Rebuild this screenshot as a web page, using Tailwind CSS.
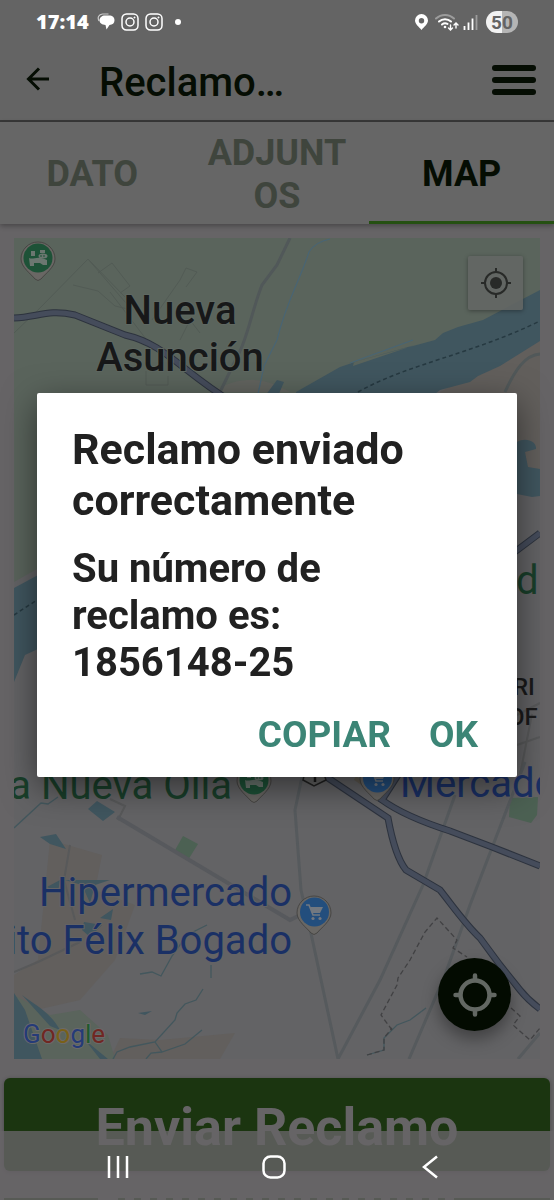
<!DOCTYPE html>
<html lang="es">
  <head>
    <meta charset="UTF-8" />
    <meta name="viewport" content="width=device-width, initial-scale=1.0" />
    <title>Reclamo</title>
    <script src="https://cdn.jsdelivr.net/npm/@tailwindcss/browser@4"></script>
  </head>
  <body class="h-screen overflow-hidden bg-[#666466] font-['Roboto','Liberation_Sans',sans-serif]">
    <!-- Status bar -->
    <div class="flex h-11 items-center justify-between bg-[#646464] pr-9 pl-9 text-white">
      <div class="flex items-center gap-2">
        <span class="font-['Open_Sans',sans-serif] text-xl leading-none font-extrabold">17:14</span>
        <svg class="h-[18px] w-[18px]" viewBox="0 0 18 18">
          <path d="M2 8C0 4 2 1.500 5.500 1h6" fill="none" stroke="#ccc" stroke-width="1.200" />
          <path d="M8 2.500h4c3.500 0 5.500 2 5.500 4.800S15.500 12 12.500 12L9.500 16.500 8.500 12C5 12 2.500 10 2.500 7.300S5 2.500 8 2.500Z" fill="#fff" />
        </svg>
        <svg class="-ml-0.5 h-[18px] w-[18px]" viewBox="0 0 18 18" fill="none" stroke="#fff" stroke-width="1.500">
          <rect x="1" y="1" width="16" height="16" rx="4.500" />
          <circle cx="9" cy="9" r="4" />
          <circle cx="13.500" cy="4.500" r=".6" fill="#fff" stroke-width=".8" />
        </svg>
        <svg class="-ml-0.5 h-[18px] w-[18px]" viewBox="0 0 18 18" fill="none" stroke="#fff" stroke-width="1.500">
          <rect x="1" y="1" width="16" height="16" rx="4.500" />
          <circle cx="9" cy="9" r="4" />
          <circle cx="13.500" cy="4.500" r=".6" fill="#fff" stroke-width=".8" />
        </svg>
        <span class="ml-1 h-1.5 w-1.5 rounded-full bg-white"></span>
      </div>
      <div class="flex items-center gap-[7px]">
        <svg class="h-4 w-[13px]" viewBox="0 0 13 16">
          <path d="M6.500 0A6.500 6.500 0 0 0 0 6.500C0 10 4 13 6.500 16 9 13 13 10 13 6.500A6.500 6.500 0 0 0 6.500 0Zm0 4a2.700 2.700 0 1 1 0 5.400 2.700 2.700 0 0 1 0-5.400Z" fill="#fff" fill-rule="evenodd" />
        </svg>
        <div class="flex items-center gap-1">
          <svg class="h-[18px] w-6" viewBox="0 0 24 18" fill="none" stroke-linecap="round">
            <path d="M1 5.500a13 13 0 0 1 18 0" stroke="#9c9c9c" stroke-width="2" />
            <path d="M4 8.500a9 9 0 0 1 12 0M7 11.500a5 5 0 0 1 5.500-.6" stroke="#fff" stroke-width="2" />
            <circle cx="10" cy="14" r="1.300" fill="#fff" />
            <path d="M15.500 12v4.500M13.500 15l2 2 2-2M21 15v-4.500M19 12l2-2 2 2" stroke="#fff" stroke-width="1.400" />
          </svg>
          <svg class="h-4 w-4" viewBox="0 0 16 16" stroke-width="1.800">
            <path d="M1.500 12v4M5.500 8.500V16M9.500 4.500V16" stroke="#fff" />
            <path d="M13.500 1v15" stroke="#9c9c9c" />
          </svg>
        </div>
        <span class="flex h-[22px] w-8 items-center justify-center rounded-full bg-linear-to-r from-[#f2f2f2] from-50% to-[#b5b5b5] to-50% text-[19px] leading-none font-bold text-[#636363]">50</span>
      </div>
    </div>

    <!-- App bar -->
    <header class="flex h-[78px] items-center border-b-2 border-[#383838] bg-[#646464] pr-[18px] pl-6">
      <button type="button" aria-label="Volver" class="mb-2 h-7 w-7">
        <svg class="h-7 w-7" viewBox="0 0 28 28" fill="none" stroke="#050d03" stroke-width="3">
          <path d="M25 15H4.500M15 4.500 4.500 15 15 25.500" />
        </svg>
      </button>
      <h1 class="mt-0.5 ml-[47px] flex-1 truncate text-[40px] leading-[48px] font-medium text-[#050d03]">Reclamo…</h1>
      <button type="button" aria-label="Menú" class="mb-1 flex w-11 flex-col gap-1.5">
        <span class="h-1.5 rounded-full bg-[#050d03]"></span>
        <span class="h-1.5 rounded-full bg-[#050d03]"></span>
        <span class="h-1.5 rounded-full bg-[#050d03]"></span>
      </button>
    </header>

    <!-- Tabs -->
    <nav class="grid h-[102px] grid-cols-3 bg-[#666666] text-[36px] leading-[43px] font-bold text-[#3f453d] shadow-[0_2px_5px_rgba(0,0,0,0.3)]">
      <button type="button" class="border-b-3 border-transparent pt-1.5">DATO</button>
      <button type="button" class="border-b-3 border-transparent pt-1.5">ADJUNT<br />OS</button>
      <button type="button" class="border-b-3 border-[#255012] pt-1.5 text-[#050d03]">MAP</button>
    </nav>

    <main>
      <!-- Map -->
      <section class="relative mx-3.5 mt-3.5">
        <svg class="block w-full" viewBox="14 238 526 821" fill="none">
          <rect x="14" y="238" width="526" height="821" fill="#636365" />
          <!-- land -->
          <path d="M14 238H540V300L510 313 470 335 436 346 340 375 290 398 200 500 37 569 14 582Z" fill="#5a645c" />
          <path d="M290 392C270 380 245 372 212 392Z" fill="#62645f" />
          <path d="M440 392 540 338V490H490Z" fill="#625f5c" />
          <path d="M50 840 102 855 95 890 135 905 115 960 80 1000 14 1015V975L38 960ZM120 1038 160 1040 235 1033 220 1059H110Z" fill="#625f5d" />
          <path d="M14 995 50 1015 80 1010 108 1035 115 1059H14Z" fill="#5a645c" />
          <!-- water -->
          <path d="M296 392 340 367 358 361 435 340 443 333 458 327 483 320 540 290V341L500 366 478 376 470 382 440 390 430 398H296ZM354 362 353 366 415 345Z" fill="#40565f" fill-rule="evenodd" />
          <path d="M14 588 40 574V648L25 655 14 682ZM265 396 277 380 284 382 278 396Z" fill="#40565f" />
          <path d="M517 442C525 437 537 441 536 449L525 452 528 467 540 469V496L532 497 517 494Z" fill="#40565f" />
          <path d="M88 809 97 801 115 812 103 821ZM40 837 56 834 66 849 50 844ZM47 887 60 880 58 892ZM65 880H110L95 885 90 903 82 885ZM100 918 113 909 111 920ZM84 922 102 925 90 937 82 930ZM138 1013 152 1011 145 1015Z" fill="#40565f" />
          <path d="M14 993 25 1010 42 1059H14ZM22 995C35 1005 50 1012 60 1030L50 1026ZM85 1040 108 1059H100Z" fill="#40565f" />
          <path d="M358 392C410 363 470 355 540 321M14 615 40 598" stroke="#263941" stroke-width="1.500" stroke-dasharray="4 3" />
          <path d="M277 340C286 302 301 278 309 252Q315 242 330 239M277 340 264 366 258 394M413 340 350 363" stroke="#496574" stroke-width="1.200" />
          <path d="M14 828 41 803 48 804 58 797M140 974 152 972 161 976 172 956 187 935 207 925M203 989 196 1000 185 1004 177 1013 175 1020 155 1042 130 1047 117 1052 113 1059M155 1042 162 1052 185 1044 202 1030M146 1059 151 1053 162 1052M211 965V978M367 1055 384 1050V1038L397 1025 410 1020 426 1008" stroke="#43575d" stroke-width="1.300" />
          <!-- parks -->
          <path d="M183 836 198 844 188 860 174 852ZM510 798 538 797 537 815 531 823 509 817Z" fill="#4c6153" />
          <!-- minor streets -->
          <path d="M39 309 88 259 132 310 115 306 98 291 73 285M98 273 112 263 130 286 120 293M110 292 146 339M14 333 39 309M152 320 180 280 186 268 197 272 186 287M180 340 190 320 200 333M146 371V385H168V376M88 259 125 297" stroke="#525b55" stroke-width="1" />
          <path d="M290 238 277 265 262 285C252 310 247 340 238 355L220 392M540 354C525 355 515 370 505 392" stroke="#515859" stroke-width="3" />
          <path d="M70 845 64 880 75 920M14 972 38 962 80 942M517 715 540 703M517 745 540 737M532 714 520 775M110 799 125 806 118 820" stroke="#58595a" stroke-width="2" />
          <path d="M117 817 290 920 315 908" stroke="#57595d" stroke-width="4" />
          <path d="M302 777 295 810 301 890 312 938 338 1059 380 980 423 885 455 795M409 1059 445 975 470 905 495 840 525 762M518 1059 540 1033" stroke="#565a5d" stroke-width="3" />
          <path d="M355 778 382 797" stroke="#5f5a50" stroke-width="4" />
          <!-- highways -->
          <path d="M14 318C38 317 48 309 75 315L125 335C165 344 180 370 232 402M540 533 512 554M325 776 388 818C392 840 398 860 406 870L440 890C452 905 465 924 480 938L500 965 520 990Q528 1000 540 1009M398 775 382 800C400 813 425 823 450 831L492 847 540 866" stroke="#2d333e" stroke-width="7" />
          <path d="M14 318C38 317 48 309 75 315L125 335C165 344 180 370 232 402M540 533 512 554M325 776 388 818C392 840 398 860 406 870L440 890C452 905 465 924 480 938L500 965 520 990Q528 1000 540 1009M398 775 382 800C400 813 425 823 450 831L492 847 540 866" stroke="#454c5b" stroke-width="5" />
          <!-- district limits -->
          <path d="M392 1030 381 1015 397 985 398 978 410 960 425 932 437 918 457 940 453 948 467 957M511 1008 520 1016 513 1025 530 1040 540 1028M367 1055 384 1050V1038L392 1028" stroke="#414143" stroke-width="1.300" stroke-dasharray="5 3" />
          <!-- route shield -->
          <path d="M306 768H322L326 780 314 786 303 780Z" fill="#646464" stroke="#222" stroke-width="1.500" />
          <path d="M315 771V782" stroke="#181818" stroke-width="2.500" />

          <!-- place pins -->
          <g id="pinPark">
            <path d="M38 242A17 17 0 0 0 21 259C21 267 31 274 35 279Q38 282 41 279C45 274 55 267 55 259A17 17 0 0 0 38 242Z" fill="#696764" stroke="#3f3d3b" stroke-width=".8" />
            <circle cx="38" cy="258" r="14.500" fill="#1d5237" />
            <path d="M29 258C34 260 37 255 47 260V265H43L40 263H34V266H30ZM31 251H35V256H31ZM40 250H45V253H40Z" fill="#6b7770" />
            <ellipse cx="43" cy="256" rx="4.500" ry="2.500" fill="#6b7770" />
            <path d="M41 255v2m3-2v2" stroke="#1d5237" stroke-width="1" />
          </g>
          <use href="#pinPark" x="216" y="522" />
          <g id="pinCart">
            <path d="M314 896A17 17 0 0 0 297 913C297 921 307 928 311 933Q314 936 317 933C321 928 331 921 331 913A17 17 0 0 0 314 896Z" fill="#696764" stroke="#3f3d3b" stroke-width=".8" />
            <circle cx="314.500" cy="912" r="14.500" fill="#234e7d" />
            <path d="M306 905H309L313 915H320" stroke="#727880" stroke-width="1.600" />
            <path d="M310 907H323L320 913H312Z" fill="#727880" />
            <circle cx="313" cy="918.500" r="1.600" fill="#727880" />
            <circle cx="320" cy="918.500" r="1.600" fill="#727880" />
          </g>
          <use href="#pinCart" x="63" y="-134" />

          <!-- place names -->
          <g stroke="#626864" stroke-width="2" paint-order="stroke" stroke-linejoin="round">
            <g font-size="40" font-weight="500" fill="#171819" stroke="#5f6862" text-anchor="middle">
              <text x="180" y="324">Nueva</text>
              <text x="180" y="371">Asunción</text>
            </g>
            <g font-size="40" fill="#193f2a" stroke="#636365">
              <text x="232" y="799" text-anchor="end">a Nueva Olla</text>
              <text x="516" y="594">d</text>
            </g>
            <g font-size="40" fill="#1a3065" stroke="#636365">
              <text x="400" y="797">Mercado</text>
              <text x="292" y="906" text-anchor="end">Hipermercado</text>
              <text x="292" y="954" text-anchor="end">ito Félix Bogado</text>
            </g>
            <g font-size="24" font-weight="500" fill="#1a1a1a" stroke="none">
              <text x="513" y="695">RI</text>
              <text x="508" y="725">OF</text>
            </g>
            <text x="23" y="1043" font-size="26" fill="#253b78" stroke="#6a6a6a">G<tspan fill="#702722">o</tspan><tspan fill="#796018">o</tspan><tspan fill="#253b78">g</tspan><tspan fill="#1f5a2c">l</tspan><tspan fill="#702722">e</tspan></text>
          </g>
        </svg>
        <button type="button" aria-label="Mi ubicación" class="absolute top-[18px] right-[17px] flex h-[54px] w-[55px] items-center justify-center rounded-xs bg-[#636664]/90 shadow-[0_1px_4px_rgba(0,0,0,0.35)]">
          <svg class="h-8 w-8" viewBox="0 0 32 32" fill="none" stroke="#282a28" stroke-width="2">
            <circle cx="16" cy="16" r="11" />
            <circle cx="16" cy="16" r="6" fill="#282a28" stroke="none" />
            <path d="M16 1v5M16 26v5M1 16h5M26 16h5" />
          </svg>
        </button>
        <button type="button" aria-label="Centrar mapa" class="absolute right-[29px] bottom-7 flex h-[73px] w-[73px] items-center justify-center rounded-full bg-[#030b01] shadow-[0_8px_16px_rgba(0,0,0,0.35)]">
          <svg class="h-11 w-11" viewBox="0 0 44 44" fill="none" stroke="#636863" stroke-width="4.500" stroke-linecap="round">
            <circle cx="22" cy="22" r="14.500" />
            <path d="M22 2.500V7M22 37v4.500M2.500 22H7M37 22h4.500" />
          </svg>
        </button>
      </section>

      <button type="button" class="mx-1 mt-[19px] flex h-[93px] w-[calc(100%-8px)] items-center justify-center rounded-md bg-[#1b3510] pt-1.5 text-[52px] font-bold text-[#666466] shadow-[0_1px_4px_rgba(0,0,0,0.3)]">Enviar Reclamo</button>
      <div class="mx-1 mt-[27px] flex h-1">
        <span class="w-[94px] bg-[#1b3510]"></span>
        <span class="ml-5 flex-1 bg-[repeating-linear-gradient(90deg,#1b3510_0_7px,#666466_7px_16px)]"></span>
        <span class="w-[94px] bg-[#1b3510]"></span>
      </div>
    </main>

    <!-- System navigation -->
    <div class="fixed inset-x-0 bottom-0 h-[69px] bg-[#666466]/80"></div>
    <div class="fixed inset-x-0 bottom-0 flex h-[69px] items-center justify-around pt-0.5 pr-[46px] pl-10">
      <button type="button" aria-label="Recientes">
        <svg class="h-6 w-6" viewBox="0 0 24 24" stroke="#fff" stroke-width="2.500">
          <path d="M3 1v22M12 1v22M21 1v22" />
        </svg>
      </button>
      <button type="button" aria-label="Inicio">
        <svg class="h-6 w-6" viewBox="0 0 24 24" fill="none" stroke="#fff" stroke-width="2.500">
          <rect x="1.500" y="1.500" width="21" height="21" rx="7" />
        </svg>
      </button>
      <button type="button" aria-label="Atrás">
        <svg class="h-6 w-6" viewBox="0 0 24 24" fill="none" stroke="#fff" stroke-width="2.500">
          <path d="M19 1.500 6 12l13 10.500" />
        </svg>
      </button>
    </div>

    <!-- Dialog -->
    <div class="fixed inset-0 flex items-center justify-center px-[37px] pb-[30px]">
      <div role="dialog" aria-modal="true" aria-labelledby="dialogTitle" class="w-full rounded-xs bg-white px-[35px] pt-[31px] pb-4 font-bold text-[#212121] shadow-[0_10px_34px_rgba(0,0,0,0.5)]">
        <h2 id="dialogTitle" class="text-[43px] leading-[51px]">Reclamo enviado correctamente</h2>
        <p class="mt-[19px] text-[40px] leading-[47px]">Su número de<br />reclamo es:<br />1856148-25</p>
        <div class="mt-[22px] flex justify-end gap-[38px] pr-1 text-[37px] leading-[53px] text-[#3c8576]">
          <button type="button">COPIAR</button>
          <button type="button">OK</button>
        </div>
      </div>
    </div>
  </body>
</html>
